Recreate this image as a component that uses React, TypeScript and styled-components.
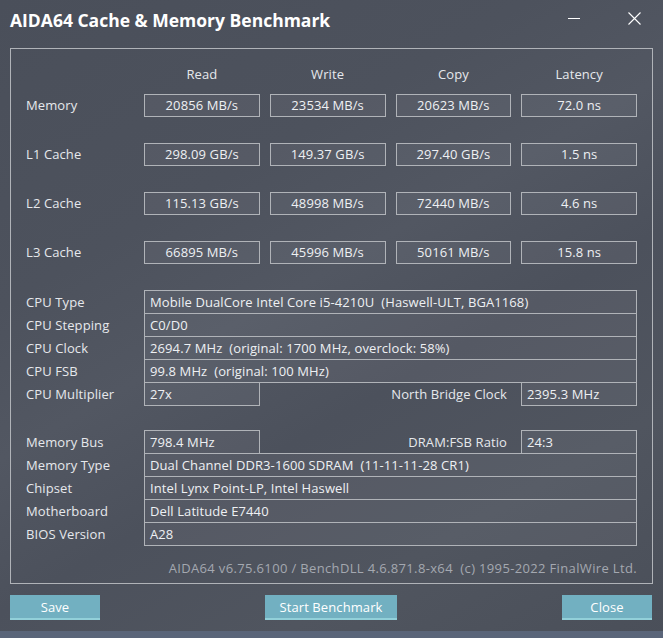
import React from "react";
import styled, { createGlobalStyle } from "styled-components";

const GlobalStyle = createGlobalStyle`
  html, body {
    margin: 0;
    padding: 0;
    background: #4b505b;
  }
  * {
    box-sizing: border-box;
  }
`;

const Window = styled.div`
  width: 663px;
  height: 638px;
  display: flex;
  flex-direction: column;
  font-family: "Open Sans", "Noto Sans", sans-serif;
  font-size: 13px;
  letter-spacing: 0.1px;
  color: #e6e8ec;
  background: linear-gradient(
    150deg,
    #4a4f5a 0%,
    #4d525d 30%,
    #525762 45%,
    #4c515c 60%,
    #50555f 78%,
    #4a4f59 100%
  );
  overflow: hidden;
`;

const TitleBar = styled.div`
  height: 48px;
  display: flex;
  align-items: flex-start;
  padding: 7px 0 0 10px;
`;

const Title = styled.h1`
  margin: 0;
  flex: 1;
  font-size: 17.5px;
  font-weight: 700;
  letter-spacing: 0;
  color: #ffffff;
  line-height: 26px;
`;

const WinButton = styled.div<{ $w: number; $right: number }>`
  width: ${(p) => p.$w}px;
  margin-right: ${(p) => p.$right}px;
  height: 24px;
  margin-top: -1px;
  display: flex;
  align-items: center;
  justify-content: center;
`;

const Frame = styled.section`
  margin: 0 10px;
  border: 1px solid #b0b3b8;
  height: 536px;
  padding: 15px 15px 0 15px;
  display: flex;
  flex-direction: column;
`;

const BenchGrid = styled.div`
  display: grid;
  grid-template-columns: 108px repeat(4, 1fr);
  column-gap: 10px;
  row-gap: 26px;
  align-items: center;
`;

const GridRow = styled.div`
  display: contents;
`;

const ColHead = styled.div`
  text-align: center;
  line-height: 20px;
  height: 20px;
  margin-bottom: -16px;
`;

const RowLabel = styled.div`
  line-height: 23px;
`;

const ValueBox = styled.div`
  height: 23px;
  border: 1px solid #b0b3b8;
  background: rgba(255, 255, 255, 0.05);
  text-align: center;
  line-height: 21px;
  color: #eef0f3;
`;

const InfoGroup = styled.div<{ $top: number }>`
  margin-top: ${(p) => p.$top}px;
  display: flex;
  flex-direction: column;
`;

const InfoRow = styled.div`
  display: flex;
  height: 23px;
  align-items: stretch;
`;

const InfoLabel = styled.div`
  width: 118px;
  line-height: 24px;
  flex-shrink: 0;
`;

const InfoCell = styled.div<{ $narrow?: boolean }>`
  flex: ${(p) => (p.$narrow ? "0 0 116px" : "1")};
  height: 24px;
  border: 1px solid #b0b3b8;
  background: rgba(255, 255, 255, 0.05);
  padding-left: 5px;
  line-height: 23px;
  white-space: pre;
  color: #eef0f3;
`;

const SideLabel = styled.div`
  flex: 1;
  text-align: right;
  padding-right: 14px;
  line-height: 24px;
`;

const Credits = styled.div`
  margin-top: auto;
  margin-bottom: 5px;
  text-align: right;
  color: #a4a8b0;
  white-space: pre;
  line-height: 20px;
  letter-spacing: 0.35px;
`;

const ButtonRow = styled.div`
  display: flex;
  justify-content: space-between;
  align-items: center;
  padding: 11px 11px 0 10px;
`;

const Button = styled.button<{ $w: number }>`
  width: ${(p) => p.$w}px;
  height: 25px;
  border: none;
  border-bottom: 2px solid #92d0d9;
  background: #72b0c1;
  color: #ffffff;
  font-family: inherit;
  font-size: 13px;
  letter-spacing: 0.1px;
  padding: 1px 0 0;
  cursor: pointer;
`;

const BottomStrip = styled.div`
  margin-top: auto;
  height: 7px;
  background: #5a6579;
`;

const bench = [
  ["Memory", "20856 MB/s", "23534 MB/s", "20623 MB/s", "72.0 ns"],
  ["L1 Cache", "298.09 GB/s", "149.37 GB/s", "297.40 GB/s", "1.5 ns"],
  ["L2 Cache", "115.13 GB/s", "48998 MB/s", "72440 MB/s", "4.6 ns"],
  ["L3 Cache", "66895 MB/s", "45996 MB/s", "50161 MB/s", "15.8 ns"],
];

const cpuInfo = [
  ["CPU Type", "Mobile DualCore Intel Core i5-4210U  (Haswell-ULT, BGA1168)"],
  ["CPU Stepping", "C0/D0"],
  ["CPU Clock", "2694.7 MHz  (original: 1700 MHz, overclock: 58%)"],
  ["CPU FSB", "99.8 MHz  (original: 100 MHz)"],
];

const memInfo = [
  ["Memory Type", "Dual Channel DDR3-1600 SDRAM  (11-11-11-28 CR1)"],
  ["Chipset", "Intel Lynx Point-LP, Intel Haswell"],
  ["Motherboard", "Dell Latitude E7440"],
  ["BIOS Version", "A28"],
];

const SplitRow = ({
  label,
  value,
  side,
  sideValue,
}: {
  label: string;
  value: string;
  side: string;
  sideValue: string;
}) => (
  <InfoRow>
    <InfoLabel>{label}</InfoLabel>
    <InfoCell $narrow>{value}</InfoCell>
    <SideLabel>{side}</SideLabel>
    <InfoCell $narrow>{sideValue}</InfoCell>
  </InfoRow>
);

export default function App() {
  return (
    <Window>
      <GlobalStyle />
      <TitleBar>
        <Title>AIDA64 Cache &amp; Memory Benchmark</Title>
        <WinButton $w={44} $right={15}>
          <svg width="12" height="12" viewBox="0 0 12 12">
            <line x1="0" y1="6.5" x2="12" y2="6.5" stroke="#fff" strokeWidth="1" />
          </svg>
        </WinButton>
        <WinButton $w={46} $right={6}>
          <svg width="13" height="13" viewBox="0 0 13 13">
            <path d="M0.5 0.5 L12.5 12.5 M12.5 0.5 L0.5 12.5" stroke="#fff" strokeWidth="1.1" />
          </svg>
        </WinButton>
      </TitleBar>

      <Frame>
        <BenchGrid>
          <GridRow>
            <div />
            <ColHead>Read</ColHead>
            <ColHead>Write</ColHead>
            <ColHead>Copy</ColHead>
            <ColHead>Latency</ColHead>
          </GridRow>
          {bench.map((row) => (
            <GridRow key={row[0]}>
              <RowLabel>{row[0]}</RowLabel>
              {row.slice(1).map((v, i) => (
                <ValueBox key={i}>{v}</ValueBox>
              ))}
            </GridRow>
          ))}
        </BenchGrid>

        <InfoGroup $top={26}>
          {cpuInfo.map(([l, v]) => (
            <InfoRow key={l}>
              <InfoLabel>{l}</InfoLabel>
              <InfoCell>{v}</InfoCell>
            </InfoRow>
          ))}
          <SplitRow label="CPU Multiplier" value="27x" side="North Bridge Clock" sideValue="2395.3 MHz" />
        </InfoGroup>

        <InfoGroup $top={25}>
          <SplitRow label="Memory Bus" value="798.4 MHz" side="DRAM:FSB Ratio" sideValue="24:3" />
          {memInfo.map(([l, v]) => (
            <InfoRow key={l}>
              <InfoLabel>{l}</InfoLabel>
              <InfoCell>{v}</InfoCell>
            </InfoRow>
          ))}
        </InfoGroup>

        <Credits>AIDA64 v6.75.6100 / BenchDLL 4.6.871.8-x64  (c) 1995-2022 FinalWire Ltd.</Credits>
      </Frame>

      <ButtonRow>
        <Button $w={90}>Save</Button>
        <Button $w={132}>Start Benchmark</Button>
        <Button $w={90}>Close</Button>
      </ButtonRow>
      <BottomStrip />
    </Window>
  );
}
